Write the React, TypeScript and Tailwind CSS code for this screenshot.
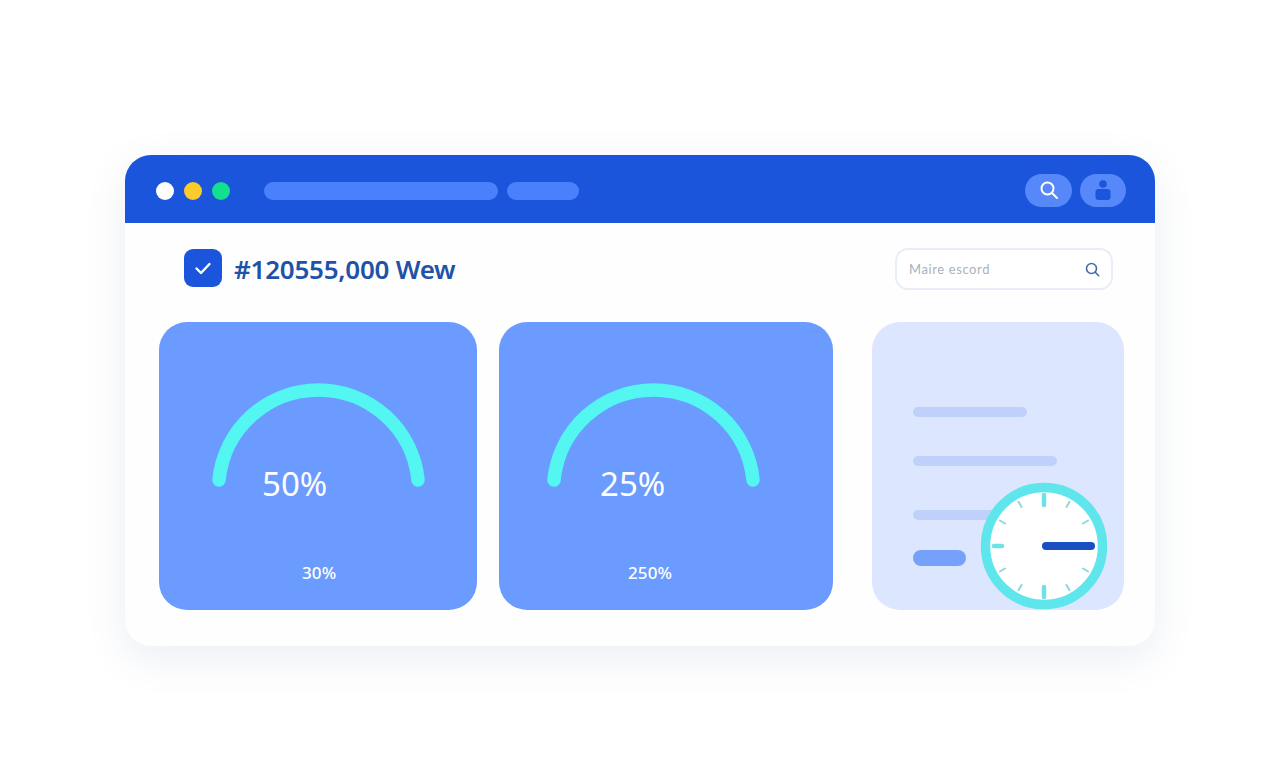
export default function App() {
  return <Page />;
}

function Gauge({ value, caption, valueLeft, captionLeft, svgLeft, width }: { value: string; caption: string; valueLeft: string; captionLeft: string; svgLeft: string; width: string }) {
  return (
    <section className={`${width} flex h-[288px] shrink-0 flex-col rounded-[28px] bg-[#6b9bfe]`}>
      <div className={`relative mt-[55px] h-[120px] w-[220px] ${svgLeft}`}>
        <svg width="220" height="120" viewBox="0 0 220 120" fill="none" className="block">
          <path d="M7 103 A100 100 0 0 1 206 103" stroke="#53f6f0" strokeWidth="13.5" strokeLinecap="round" />
        </svg>
        <span className={`absolute top-[88px] text-[33px] leading-[38px] text-white ${valueLeft}`}>{value}</span>
      </div>
      <div className={`mt-[65px] text-[17px] leading-[22px] font-medium tracking-[0.1px] text-white ${captionLeft}`}>{caption}</div>
    </section>
  );
}

function Clock() {
  const ticks = [30, 60, 120, 150, 210, 240, 300, 330];
  return (
    <svg width="128" height="128" viewBox="-64 -64 128 128" fill="none" className="absolute right-[16px] bottom-0">
      <circle r="58.5" fill="#ffffff" stroke="#5fe5ec" strokeWidth="9.5" />
      {ticks.map((a) => {
        const t = (a * Math.PI) / 180;
        return (
          <line
            key={a}
            x1={Math.sin(t) * 45}
            y1={-Math.cos(t) * 45}
            x2={Math.sin(t) * 51}
            y2={-Math.cos(t) * 51}
            stroke="#8fd8dd"
            strokeWidth="2"
            strokeLinecap="round"
          />
        );
      })}
      <line x1="0" y1="-51" x2="0" y2="-41" stroke="#6fe2e8" strokeWidth="4.5" strokeLinecap="round" />
      <line x1="0" y1="41" x2="0" y2="51" stroke="#6fe2e8" strokeWidth="4.5" strokeLinecap="round" />
      <line x1="-50" y1="0" x2="-42" y2="0" stroke="#6fe2e8" strokeWidth="4.5" strokeLinecap="round" />
      <line x1="2" y1="0" x2="47" y2="0" stroke="#1a4fc4" strokeWidth="8" strokeLinecap="round" />
    </svg>
  );
}

function Page() {
  return (
    <div className="flex min-h-[768px] justify-center bg-white pt-[155px] font-['Noto_Sans','Liberation_Sans',sans-serif]">
      <main className="h-[491px] w-[1030px] rounded-[26px] bg-[#fefefe] shadow-[0_12px_40px_rgba(60,90,150,0.10)]">
        <header className="flex h-[68px] items-center rounded-t-[26px] bg-[#1a55db] pt-[4px] pr-[29px] pl-[31px]">
          <div className="flex gap-[10px]">
            <span className="h-[18px] w-[18px] rounded-full bg-white" />
            <span className="h-[18px] w-[18px] rounded-full bg-[#fbcb2c]" />
            <span className="h-[18px] w-[18px] rounded-full bg-[#12e08f]" />
          </div>
          <div className="ml-[34px] h-[18px] w-[234px] rounded-full bg-[#4a80fb]" />
          <div className="ml-[9px] h-[18px] w-[72px] rounded-full bg-[#4a80fb]" />
          <div className="ml-auto -mt-[2px] flex gap-[8px]">
            <button className="flex h-[33px] w-[47px] items-center justify-center rounded-full bg-[#5688fa]">
              <svg width="20" height="20" viewBox="0 0 20 20" fill="none" stroke="#ffffff" strokeWidth="2" strokeLinecap="round">
                <circle cx="8.5" cy="8.5" r="6" />
                <path d="M13 13 L18 18" />
              </svg>
            </button>
            <button className="flex h-[33px] w-[46px] items-center justify-center rounded-full bg-[#5688fa]">
              <svg width="16" height="20" viewBox="0 0 16 20" fill="#1a55db">
                <circle cx="8" cy="4" r="3.8" />
                <rect x="0.5" y="9" width="15" height="11" rx="3" />
              </svg>
            </button>
          </div>
        </header>

        <div className="flex items-center justify-between pt-[25px] pr-[42px] pl-[59px]">
          <div className="flex items-center gap-[12px]">
            <div className="-mt-[2px] flex h-[38px] w-[38px] items-center justify-center rounded-[9px] bg-[#1a55db]">
              <svg width="20" height="20" viewBox="0 0 20 20" fill="none" stroke="#ffffff" strokeWidth="2.4" strokeLinecap="round" strokeLinejoin="round">
                <path d="M3.5 10.5 L8 15 L16.5 6" />
              </svg>
            </div>
            <h1 className="text-[26px] leading-[34px] font-semibold tracking-[-0.25px] text-[#1f52a8]">#120555,000 Wew</h1>
          </div>
          <label className="flex h-[42px] w-[218px] items-center justify-between rounded-[13px] border-2 border-[#e9edf5] bg-white pr-[11px] pl-[12px] font-['Lato','Noto_Sans',sans-serif] text-[13px] tracking-[0.6px] text-[#aab1bd]">
            <span className="translate-y-px">Maire escord</span>
            <svg width="15" height="15" viewBox="0 0 15 15" fill="none" stroke="#3e6da8" strokeWidth="1.6" strokeLinecap="round">
              <circle cx="6.5" cy="6.5" r="5" />
              <path d="M10.3 10.3 L13.7 13.7" />
            </svg>
          </label>
        </div>

        <div className="mt-[32px] flex pl-[34px]">
          <Gauge width="w-[318px]" svgLeft="ml-[53px]" value="50%" valueLeft="left-[50px]" caption="30%" captionLeft="ml-[143px]" />
          <div className="ml-[22px]">
            <Gauge width="w-[334px]" svgLeft="ml-[48px]" value="25%" valueLeft="left-[53px]" caption="250%" captionLeft="ml-[129px]" />
          </div>
          <section className="relative ml-[39px] flex h-[288px] w-[252px] flex-col rounded-[28px] bg-[#dce6fe] pt-[85px] pl-[41px]">
            <div className="h-[10px] w-[114px] rounded-full bg-[#bfd1fb]" />
            <div className="mt-[39px] h-[10px] w-[144px] rounded-full bg-[#bfd1fb]" />
            <div className="mt-[44px] h-[10px] w-[90px] rounded-full bg-[#bfd1fb]" />
            <div className="mt-[30px] h-[16px] w-[53px] rounded-full bg-[#76a1fb]" />
            <Clock />
          </section>
        </div>
      </main>
    </div>
  );
}
